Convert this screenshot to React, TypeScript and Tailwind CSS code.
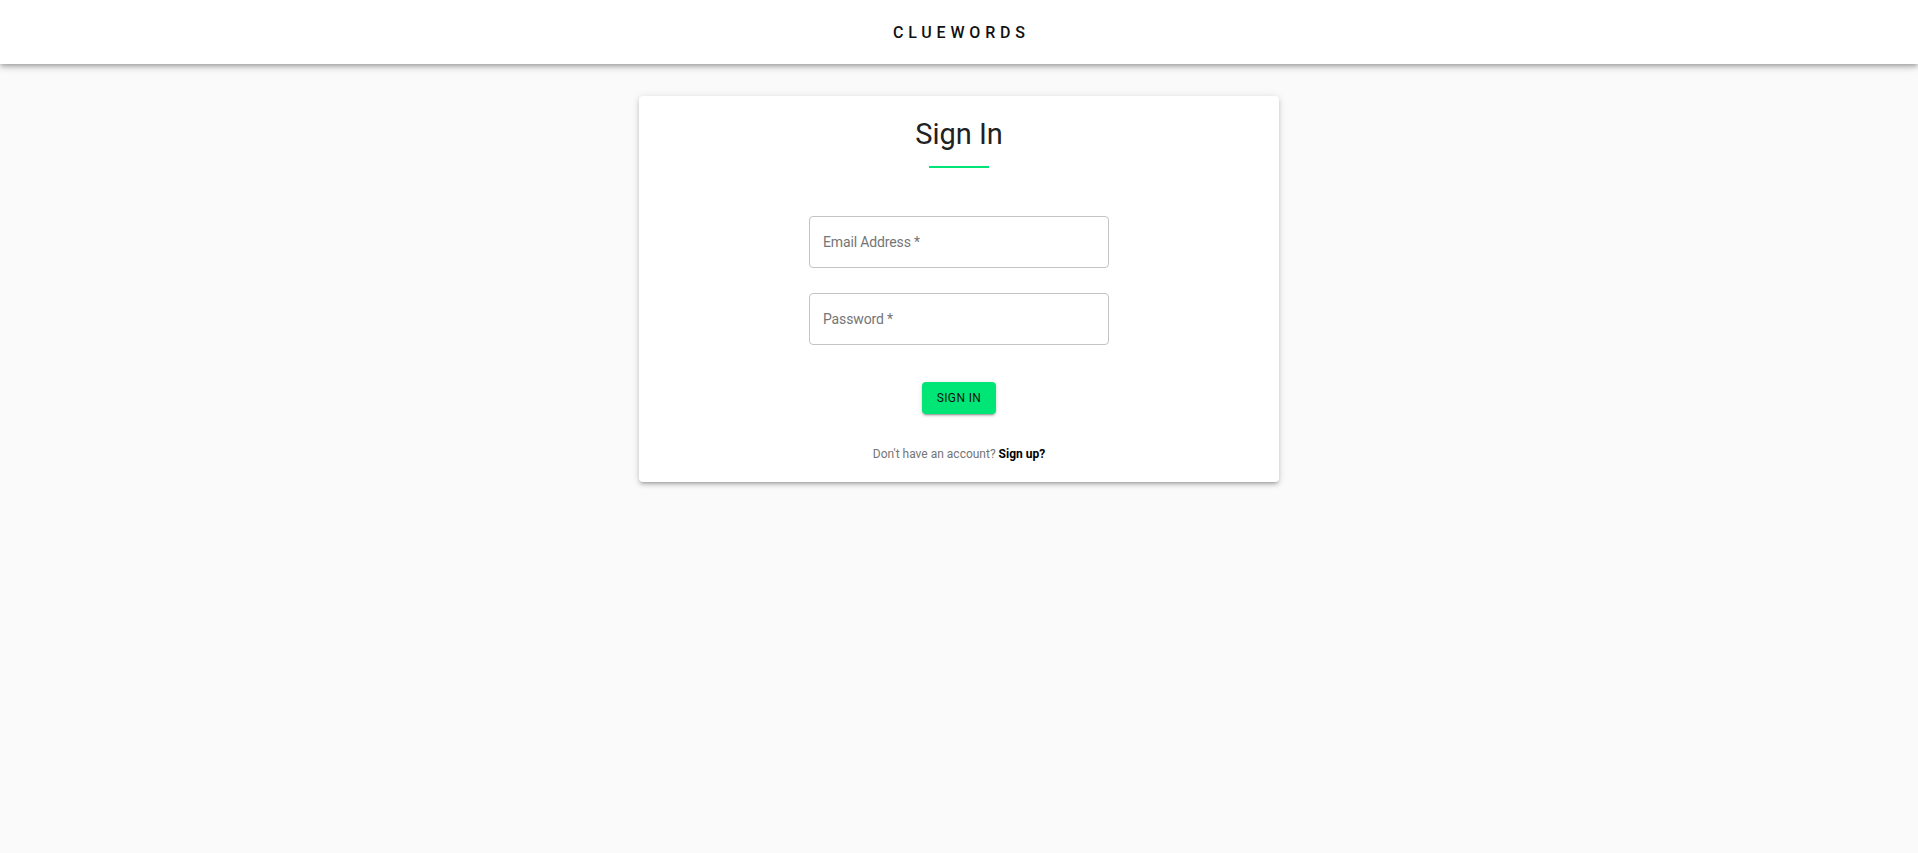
import { useState } from 'react'

const FONT = 'font-[Roboto,"Liberation_Sans",sans-serif]'

function Field({ label, type }: { label: string; type: string }) {
  const [value, setValue] = useState('')
  return (
    <div className="w-[300px]">
      <input
        type={type}
        value={value}
        onChange={(e) => setValue(e.target.value)}
        placeholder={label}
        className="h-[52px] w-full rounded-[4px] border border-[#c4c4c4] bg-white px-[13px] text-[14px] tracking-[-0.01em] text-[#212121] outline-none placeholder:text-[#757575] focus:border-[#00e676]"
      />
    </div>
  )
}

export default function App() {
  return (
    <div className={`min-h-screen bg-[#fafafa] ${FONT}`}>
      {/* App bar */}
      <header className="relative z-10 flex h-16 items-center justify-center bg-white pt-[2px] shadow-[0_2px_4px_-1px_rgba(0,0,0,0.2),0_4px_5px_0_rgba(0,0,0,0.14),0_1px_10px_0_rgba(0,0,0,0.12)]">
        <span className="pl-[0.3em] text-[16px] font-medium tracking-[0.3em] text-[#111]">CLUEWORDS</span>
      </header>

      {/* Sign in card */}
      <main className="flex justify-center pt-8">
        <div className="flex w-[640px] flex-col items-center rounded-[4px] bg-white pb-5 pt-[21px] shadow-[0_3px_3px_-2px_rgba(0,0,0,0.2),0_3px_4px_0_rgba(0,0,0,0.14),0_1px_8px_0_rgba(0,0,0,0.12)]">
          <h1 className="text-[29px] font-normal leading-[34px] text-[#212121]">Sign In</h1>
          <div className="mt-[15px] h-[2px] w-[60px] bg-[#00e676]" />

          <form className="mt-12 flex flex-col items-center gap-[25px]" onSubmit={(e) => e.preventDefault()}>
            <Field label="Email Address *" type="email" />
            <Field label="Password *" type="password" />
            <button
              type="submit"
              className="mt-3 h-8 w-[74px] rounded-[4px] bg-[#00e676] text-[12px] font-normal uppercase tracking-[0.03em] text-[#111] shadow-[0_3px_1px_-2px_rgba(0,0,0,0.2),0_2px_2px_0_rgba(0,0,0,0.14),0_1px_5px_0_rgba(0,0,0,0.12)]"
            >
              Sign In
            </button>
          </form>

          <p className="mt-[33px] pb-px text-[12px] leading-[14px] text-[#757575]">
            Don't have an account? <a href="#" className="font-bold text-black">Sign up?</a>
          </p>
        </div>
      </main>
    </div>
  )
}
